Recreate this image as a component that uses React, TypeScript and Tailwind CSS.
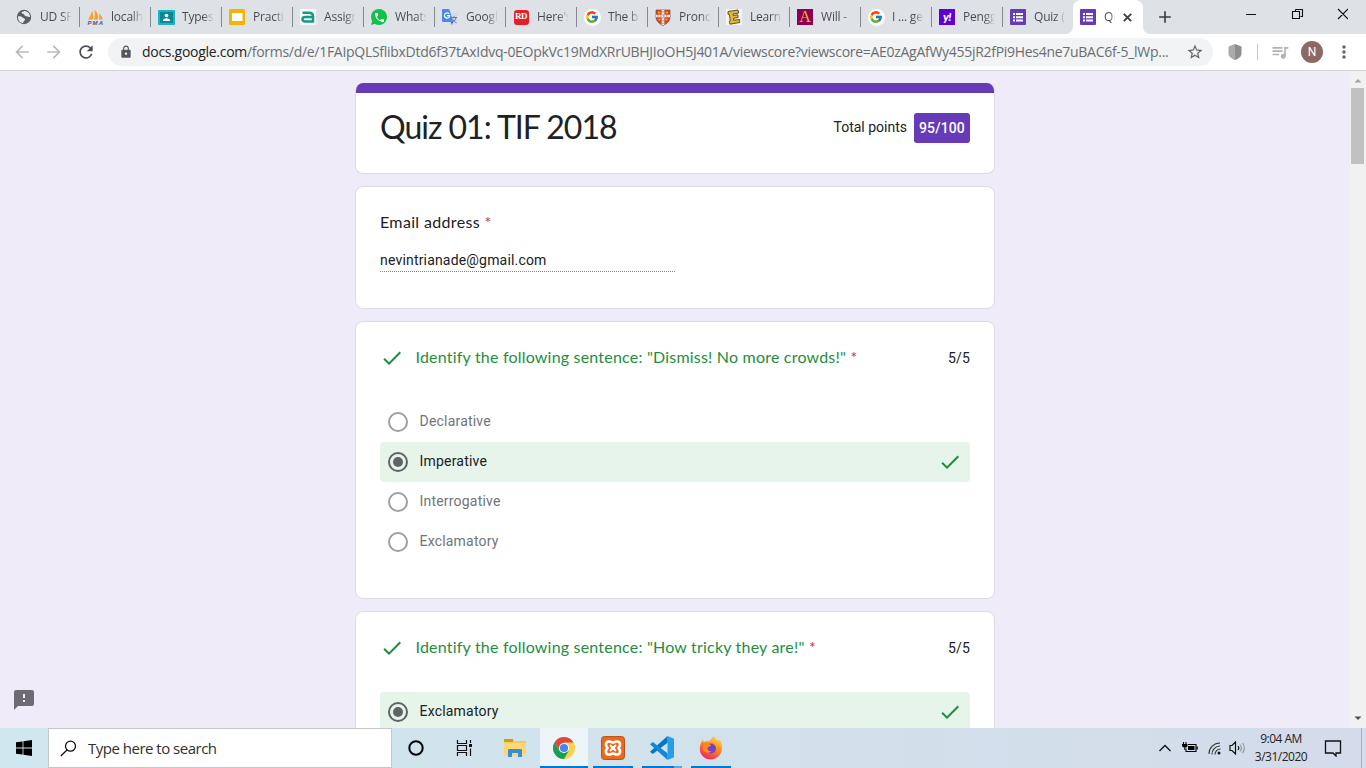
import React from "react";
import {
  MdArrowBack, MdArrowForward, MdRefresh, MdLock, MdStarBorder, MdQueueMusic,
  MdMoreVert, MdFeedback, MdAdd,
} from "react-icons/md";
import { FcGoogle } from "react-icons/fc";
import { FaWhatsapp } from "react-icons/fa";

const Globe = () => (
  <svg width="16" height="16" viewBox="0 0 16 16">
    <circle cx="8" cy="8" r="7.2" fill="#5b5f63" />
    <path d="M2 7.500c2-.5 3.500 0 4.500 1s2.500.7 2.500 2-1.500 1.500-2 3.500C3.500 13.500 1.800 11 2 7.500z" fill="#e8eaed" />
    <path d="M8.500 2c-1.500.5-3 1-2.800 2s2 .5 2.500 1.500S9 7.200 10.500 7.200s2 1.300 3.500.8C14 5 12 2.300 8.500 2z" fill="#e8eaed" />
  </svg>
);
const Pma = () => (
  <svg width="17" height="16" viewBox="0 0 17 16">
    <path d="M1 10.500C3 8 4.500 5 5 2c1.500 2.500 1.500 6 1 8.500zM7 10.500C8 7 8 4 7.500 .8c3 2.400 4 6 3.700 9.700zM12 10.500c.5-2 .3-4-.3-6 2.300 1.500 3.600 3.700 4 6z" fill="#f89c2e" />
    <text x="0.500" y="15.800" fontSize="6" fontWeight="bold" fontStyle="italic" fontFamily="Liberation Sans, sans-serif" fill="#4d5a80" textLength="15.500">PMA</text>
  </svg>
);
const Classroom = () => (
  <svg width="17" height="15" viewBox="0 0 17 15">
    <rect width="17" height="15" rx="1" fill="#19b4c5" />
    <rect x="2" y="2" width="13" height="11" fill="#0f8793" />
    <circle cx="8.500" cy="5.500" r="1.800" fill="#fff" />
    <path d="M4.800 11c0-3.700 7.400-3.700 7.400 0z" fill="#fff" />
  </svg>
);
const Slides = () => (
  <svg width="16" height="16" viewBox="0 0 16 16">
    <rect width="16" height="16" rx="1.500" fill="#f5b400" />
    <rect x="3" y="4" width="10.500" height="8" fill="#fff" />
  </svg>
);
const Assign = () => (
  <svg width="16" height="16" viewBox="0 0 16 16">
    <rect width="16" height="16" rx="1" fill="#f4f8f7" />
    <path d="M2.500 3.800h6.500c2.800 0 4 1.200 4 3.700v4.900H5.500C3.300 12.400 2.500 11.500 2.500 10.200S3.300 8.100 5.500 8.100H12" fill="none" stroke="#129c87" strokeWidth="2.500" />
  </svg>
);
const Whats = () => (
  <span className="relative flex size-4 items-center justify-center rounded-full bg-[#12c04a] text-white">
    <svg className="absolute bottom-0 left-0" width="5" height="5" viewBox="0 0 5 5"><path d="M0 5l1.500-5L5 3.500z" fill="#12c04a" /></svg>
    <svg className="relative" width="9" height="9" viewBox="3 3 18 18" fill="#fff">
      <path d="M6.600 10.800c1.400 2.800 3.800 5.100 6.600 6.600l2.200-2.200c.3-.3.700-.4 1-.2 1.100.4 2.300.6 3.600.6.600 0 1 .4 1 1V20c0 .6-.4 1-1 1C10.600 21 3 13.400 3 4c0-.6.400-1 1-1h3.500c.6 0 1 .4 1 1 0 1.200.2 2.400.6 3.600.1.300 0 .7-.2 1z" />
    </svg>
  </span>
);
const Translate = () => (
  <svg width="16" height="16" viewBox="0 0 16 16">
    <path d="M6 4h8.500c.8 0 1.200.5 1.200 1.200V15c0 .6-.4 1-1 1H9z" fill="#d3dbe8" />
    <path d="M9 8.500h6M12 7.200v1.300M14 8.700c-.8 2.500-2 4-4 5M10.500 9.800c1 2 2.300 3.200 4 4" stroke="#5f7c9d" strokeWidth="1" fill="none" />
    <path d="M1.200 0h6l4 13H1.200C.5 13 0 12.500 0 11.800V1.200C0 .5.500 0 1.200 0z" fill="#4a87ee" />
    <path d="M9 13h2.200L9.700 16z" fill="#2f62c9" />
    <path d="M7 4.800A2.600 2.600 0 1 0 7.600 6.700H5" fill="none" stroke="#fff" strokeWidth="1.200" />
  </svg>
);
const Rd = () => (
  <span className="flex h-[15px] w-[15px] items-center justify-center rounded-[3px] bg-[#e0202b] font-['Liberation_Serif',serif] text-[9px] font-bold tracking-[-0.500px] text-white">RD</span>
);
const Google = () => (
  <span className="flex size-[17px] items-center justify-center rounded-full bg-white"><FcGoogle size={14} /></span>
);
const Shield = () => (
  <svg width="16" height="17" viewBox="0 0 16 17">
    <path d="M1 1h14v7c0 4-3 6.500-7 8.500C4 14.500 1 12 1 8z" fill="#d5452b" stroke="#8a4a30" strokeWidth=".7" />
    <path d="M8 1v15M1 7h14" stroke="#f6eedc" strokeWidth="2.600" />
    <path d="M8 2v13M2 7h12" stroke="#b9502e" strokeWidth=".8" strokeDasharray="1.500 1.500" />
    <path d="M3 3.500h2.500M10.500 3.500H13M3.500 10.500h2M10.500 10.500h2" stroke="#f0b43c" strokeWidth="1.600" />
  </svg>
);
const LearnE = () => (
  <svg width="16" height="16" viewBox="0 0 16 16">
    <rect width="16" height="16" fill="#f6f4ee" />
    <path d="M2 2.500l10-1.500.7 3-5.700 1 .3 1.500 4.500-.7.300 2.700-4.600.8.300 2 5.700-.8.300 3-9.800 1.700-.7-3 1-.5L3.400 5.500 2 5.300z" fill="#e8b62b" stroke="#4b4330" strokeWidth=".9" />
  </svg>
);
const LetterA = () => (
  <span className="flex size-4 items-center justify-center bg-[#8c0051] font-['Liberation_Serif',serif] text-[16px] leading-4 text-[#f5b320]">A</span>
);
const Yahoo = () => (
  <span className="flex size-4 items-center justify-center bg-[#5f01d1] font-['Lato',sans-serif] text-[12px] leading-none font-black tracking-[-0.500px] text-white italic">y!</span>
);
const Forms = () => (
  <svg width="16" height="16" viewBox="0 0 16 16">
    <rect width="16" height="16" rx="1" fill="#673ab7" />
    <path d="M3 4h2v2H3zM6 4h7v2H6zM3 7.200h2v2H3zM6 7.200h7v2H6zM3 10.400h2v2H3zM6 10.400h7v2H6z" fill="#fff" />
  </svg>
);

const tabs: [string, () => React.JSX.Element][] = [
  ["UD SF", Globe], ["localh", Pma], ["Types", Classroom], ["Practi", Slides], ["Assigr", Assign],
  ["Whats", Whats], ["Googl", Translate], ["Here's", Rd], ["The b", Google], ["Prono", Shield],
  ["Learn", LearnE], ["Will -", LetterA], ["I ... ge", Google], ["Pengg", Yahoo], ["Quiz (", Forms],
];

function TabStrip() {
  return (
    <div className="flex h-[34px] shrink-0 bg-[#dee1e6] pl-2">
      {tabs.map(([label, Icon], i) => (
        <div key={i} className="flex w-[71px] shrink-0 items-center pl-[7px]">
          <span className="flex w-[18px] shrink-0 justify-center"><Icon /></span>
          <span className="ml-[7px] w-[32px] overflow-hidden bg-linear-to-r from-[#45494d] from-65% to-[#dee1e6] bg-clip-text text-[12px] tracking-[-0.200px] whitespace-nowrap text-transparent">{label}</span>
          {i < 14 && <span className="-mr-px ml-auto h-5 w-px bg-[#85888c]" />}
        </div>
      ))}
      <div className="relative flex w-[70px] shrink-0 items-center rounded-t-lg bg-white pl-[7px]">
        <svg className="absolute bottom-0 -left-2" width="8" height="8"><path d="M8 0v8H0c5 0 8-3 8-8z" fill="#fff" /></svg>
        <svg className="absolute -right-2 bottom-0" width="8" height="8"><path d="M0 0v8h8C3 8 0 5 0 0z" fill="#fff" /></svg>
        <Forms />
        <span className="ml-2 w-[11px] overflow-hidden bg-linear-to-r from-[#45494d] from-60% to-white bg-clip-text text-[12px] whitespace-nowrap text-transparent">Qu</span>
        <svg className="ml-2" width="9" height="9" viewBox="0 0 9 9"><path d="M.8.800l7.400 7.400M8.200.8L.8 8.200" stroke="#3c4043" strokeWidth="1.900" /></svg>
      </div>
      <MdAdd size={20} className="mt-[7px] ml-[12px] text-[#3c4043]" />
      <div className="ml-auto flex pt-2 pr-[18px]">
        <svg width="102" height="14" viewBox="0 0 102 14" fill="none" stroke="#111" strokeWidth="1.100">
          <path d="M0 6.500h10M49.500 1.500h7v7h-2M46.500 3.500h7v7h-7zM49.500 3v-1.500M92 1l10 10M102 1L92 11" />
        </svg>
      </div>
    </div>
  );
}

function Toolbar() {
  return (
    <div className="flex h-[37px] shrink-0 items-center border-b border-[#d5d6da] bg-white pl-3 text-[#5f6368]">
      <MdArrowBack size={20} className="text-[#b9bbbe]" />
      <MdArrowForward size={20} className="ml-3 text-[#b9bbbe]" />
      <MdRefresh size={20} className="ml-3 text-[#4b4f53]" />
      <div className="ml-3 flex h-7 w-[1105px] items-center rounded-full bg-[#f1f3f4] pl-[11px]">
        <MdLock size={14} className="text-[#54585c]" />
        <span className="mb-px ml-[9px] w-[1040px] text-[14px] tracking-[-0.288px] whitespace-nowrap text-[#6a6e73]">
          <span className="text-[#202124]">docs.google.com</span>/forms/d/e/1FAIpQLSflibxDtd6f37tAxIdvq-0EOpkVc19MdXRrUBHJIoOH5J401A/viewscore?viewscore=AE0zAgAfWy455jR2fPi9Hes4ne7uBAC6f-5_lWp...
        </span>
        <MdStarBorder size={18} className="ml-[4px] shrink-0" />
      </div>
      <svg className="ml-[15px]" width="14" height="16" viewBox="0 0 14 16">
        <path d="M7 0l6.500 2.500v7C13.500 12.500 11 14.500 7 16z" fill="#8e8e8e" />
        <path d="M7 0L.5 2.500v7C.5 12.500 3 14.500 7 16z" fill="#aaa" />
      </svg>
      <span className="ml-[15px] h-4 w-px bg-[#c4c6c9]" />
      <MdQueueMusic size={20} className="ml-[12px] text-[#b0b2b5]" />
      <span className="ml-[11px] flex size-[22px] items-center justify-center rounded-full bg-[#8d6a61] font-['Roboto',sans-serif] text-[12px] text-white">N</span>
      <MdMoreVert size={20} className="ml-[11px]" />
    </div>
  );
}

const Check = () => (
  <svg width="24" height="24" viewBox="0 0 24 24" fill="#1e8e3e" className="shrink-0">
    <path d="M9 16.170L4.830 12l-1.420 1.410L9 19 21 7l-1.410-1.410z" />
  </svg>
);

function Option({ label, selected = false }: { label: string; selected?: boolean }) {
  return (
    <div className={selected ? "flex h-10 items-center rounded bg-[#e6f4ea] px-2 text-[#202124]" : "flex h-10 items-center px-2 text-[#70757a]"}>
      <span className={selected ? "flex size-5 items-center justify-center rounded-full border-2 border-[#5f6368]" : "size-5 rounded-full border-2 border-[#9aa0a6]"}>
        {selected && <span className="size-[10px] rounded-full bg-[#5f6368]" />}
      </span>
      <span className="mb-[2px] ml-[11.500px] flex-1 text-[14px] leading-5 tracking-[0.200px]">{label}</span>
      {selected && <Check />}
    </div>
  );
}

function Question({ title, children }: { title: string; children: React.ReactNode }) {
  return (
    <section className="mt-3 shrink-0 rounded-lg border border-[#dadce0] bg-white px-6 pt-6 pb-9">
      <div className="flex h-6 items-center">
        <Check />
        <h2 className="mb-[3px] ml-[11.500px] flex-1 font-['Lato',sans-serif] text-[16px] leading-6 tracking-[0.200px] text-[#1e8e3e]">
          {title} <span className="text-[#d93025]">*</span>
        </h2>
        <span className="text-[14px] tracking-[0.200px] text-[#202124]">5/5</span>
      </div>
      <div className="mt-8">{children}</div>
    </section>
  );
}

function Slot({ children, active = false, open = false }: { children: React.ReactNode; active?: boolean; open?: boolean }) {
  return (
    <div className={active ? "relative mr-px flex h-10 w-12 items-center justify-center bg-[#edf5f9]" : "relative mr-px flex h-10 w-12 items-center justify-center"}>
      {children}
      {active && <span className="absolute inset-x-0 bottom-0 h-[2px] bg-[#0078d7]" />}
      {open && <span className="absolute inset-x-1 bottom-0 h-[2px] bg-[#0078d7]" />}
    </div>
  );
}

function Taskbar() {
  return (
    <div className="flex h-10 shrink-0 items-center bg-linear-to-r from-[#cfe7ef] via-[#d1e3ec] via-40% to-[#d4dbea] text-black">
      <div className="flex w-12 justify-center">
        <svg width="16" height="16" viewBox="0 0 16 16"><path d="M0 2.300L6.600 1.400V7.600H0zM7.400 1.300L16 0V7.600H7.400zM0 8.400H6.600V14.600L0 13.700zM7.400 8.400H16V16L7.400 14.700z" /></svg>
      </div>
      <div className="flex h-10 w-[344px] items-center border border-[#c2c7ca] bg-white pl-[11px]">
        <svg width="17" height="17" viewBox="0 0 17 17" fill="none" stroke="#111" strokeWidth="1.300"><circle cx="10.500" cy="6.200" r="5" /><path d="M7 10L.8 16" /></svg>
        <span className="ml-[11px] text-[15px] tracking-[-0.500px] text-[#303030]">Type here to search</span>
      </div>
      <div className="flex w-12 justify-center">
        <svg width="16" height="16" viewBox="0 0 16 16"><circle cx="8" cy="8" r="6.700" fill="none" stroke="#000" strokeWidth="2" /></svg>
      </div>
      <div className="mr-[3px] flex w-12 justify-center">
        <svg width="17" height="16" viewBox="0 0 17 16" fill="none" stroke="#111" strokeWidth="1.200">
          <path d="M1.500 0v3.500h9V0M1.500 16v-3.500h9V16M1.500 5.500h9v5h-9zM14.500 0v3M14.500 8.500V16" /><path d="M13 4h3v3h-3z" fill="#111" stroke="none" />
        </svg>
      </div>
      <Slot>
        <svg width="22" height="18" viewBox="0 0 22 18">
          <path d="M0 0h9l1.500 2H22v15H0z" fill="#f6cb5c" /><path d="M0 0h9v3H0z" fill="#d79a13" /><path d="M0 4h22v13H0z" fill="#fbd875" />
          <path d="M4 18v-6.500c0-1 .5-1.500 1.500-1.500h11c1 0 1.500.5 1.500 1.500V18h-4v-4H8v4z" fill="#3a8ed0" />
        </svg>
      </Slot>
      <Slot active>
        <svg width="22" height="22" viewBox="0 0 22 22">
          <circle cx="11" cy="11" r="11" fill="#fdd04b" />
          <path d="M1.470 5.500A11 11 0 0 1 20.530 5.500H11L6.200 13.800z" fill="#db4a3c" />
          <path d="M1.470 5.500A11 11 0 0 0 11 22L15.800 13.700 11 11 6.200 13.800z" fill="#189e5b" />
          <circle cx="11" cy="11" r="5.100" fill="#fff" /><circle cx="11" cy="11" r="4.100" fill="#4684ee" />
        </svg>
      </Slot>
      <Slot open>
        <svg width="24" height="24" viewBox="0 0 24 24">
          <rect x=".5" y=".5" width="23" height="23" rx="3" fill="#ea6a1c" stroke="#b95318" />
          <path d="M8 5.500C4.500 5.500 4 9.500 6.500 12 4 14.500 4.500 18.500 8 18.500c2 0 2.500-1 4-1s2 1 4 1c3.500 0 4-4 1.500-6.500 2.500-2.500 2-6.500-1.500-6.500-2 0-2.500 1-4 1s-2-1-4-1z" fill="#ea6a1c" stroke="#fff" strokeWidth="2.600" strokeLinejoin="round" />
          <path d="M9.700 9.700l4.600 4.600M14.300 9.700l-4.600 4.600" stroke="#fff" strokeWidth="2.200" strokeLinecap="round" />
        </svg>
      </Slot>
      <div className="relative mr-px flex h-10 w-12 items-center justify-center">
        <svg width="24" height="24" viewBox="0 0 24 24">
          <path d="M17.500 0L24 2.800v18.400L17.500 24z" fill="#249fe8" />
          <path d="M17.500 0v6.700L2.800 18 0 15.700z" fill="#0277c4" /><path d="M17.500 24v-6.700L2.800 6 0 8.300z" fill="#1188d6" />
        </svg>
        <span className="absolute bottom-0 left-1 h-[2px] w-8 bg-[#0078d7]" />
        <span className="absolute bottom-0 left-9 h-[2px] w-2 bg-[#5fa5df]" />
      </div>
      <Slot open>
        <svg width="24" height="24" viewBox="0 0 24 24">
          <defs><linearGradient id="ff" x1=".8" y1="0" x2=".3" y2="1"><stop offset="0" stopColor="#ffdf3d" /><stop offset=".45" stopColor="#ff8a1f" /><stop offset="1" stopColor="#f0245e" /></linearGradient></defs>
          <path d="M14.500 0c1 2 3.500 3 4.500 5l1.500-1.200C22.500 6.500 23.500 9.500 23 13c-.7 6-5.500 10.500-11.500 10.500S.5 18.500.8 12.500C.9 9 2 6.500 4 4l.8 2.500C6.500 5 8 5 9.500 5.500 11.500 4.500 12.500 2.500 14.500 0z" fill="url(#ff)" />
          <circle cx="12" cy="12.500" r="5" fill="#7b40c8" /><path d="M4.500 9c3-2.500 6-1.500 7.500.5-1 1.500-3.500 1-3.500 3s2 3 4 2.500c-2 3-8 2-8.700-2z" fill="#ff8a24" />
        </svg>
      </Slot>
      <div className="ml-auto flex items-center">
        <svg width="12" height="8" viewBox="0 0 12 8" fill="none" stroke="#111" strokeWidth="1.300"><path d="M.5 7L6 1.500 11.500 7" /></svg>
        <svg className="ml-[10px]" width="17" height="12" viewBox="0 0 17 12">
          <path d="M7 2.500h8v7H5V6.500M2.500 0v2M5 0v2" fill="none" stroke="#000" strokeWidth="1.100" />
          <path d="M1 2h5.500v1.500C6.500 5 5.300 5.500 4.300 5.600V8h-1V5.600C2 5.400 1 4.700 1 3.500zM7 4h6.500v4H7zM15.500 4.500h1.300v3h-1.300z" />
        </svg>
        <svg className="ml-[10px]" width="14" height="13" viewBox="0 0 14 13" fill="none" stroke="#333" strokeWidth="1.100">
          <path d="M1 12A11 11 0 0 1 12 1M4 12.500A8 8 0 0 1 12 4M7 12.500A5.500 5.500 0 0 1 12.500 7" /><circle cx="11" cy="11" r="1.500" fill="#111" stroke="none" />
        </svg>
        <svg className="ml-[7px]" width="17" height="14" viewBox="0 0 17 14" fill="none" stroke="#111" strokeWidth="1.200">
          <path d="M1 4.500h2L6.500 1v12L3 9.500H1zM9 5c.8 1 .8 3 0 4" /><path d="M11 3.500c1.600 2 1.600 5 0 7M13.500 2c2.200 3 2.200 7 0 10" stroke="#9299a5" />
        </svg>
        <div className="ml-[7px] w-[56px] text-center text-[12px] leading-[18px] tracking-[-0.500px] whitespace-nowrap text-[#222]">
          <div>9:04 AM</div><div>3/31/2020</div>
        </div>
        <svg className="ml-[15px]" width="18" height="17" viewBox="0 0 18 17" fill="none" stroke="#111" strokeWidth="1.300"><path d="M1.500 1h15v12h-4.500v3l-3-3H1.500z" /></svg>
        <span className="mr-1 ml-[19px] h-10 w-px bg-[#aab2c0]" />
      </div>
    </div>
  );
}

export default function App() {
  return (
    <div className="flex h-[768px] w-[1366px] flex-col overflow-hidden font-['Open_Sans','Noto_Sans',sans-serif]">
      <TabStrip />
      <Toolbar />
      <div className="flex h-[657px] shrink-0">
        <main className="relative flex h-full flex-1 flex-col items-center overflow-hidden bg-[#f0ebf8] font-['Roboto',sans-serif]">
          <div className="flex h-full w-[640px] flex-col pt-3">
            <header className="h-[91px] shrink-0 overflow-hidden rounded-lg border border-t-0 border-[#dadce0] bg-white">
              <div className="-mx-px h-[10px] bg-[#673ab7]" />
              <div className="flex items-start px-6">
                <h1 className="mt-[14px] flex-1 font-['Lato',sans-serif] text-[32px] leading-10 tracking-[-1px] text-[#202124]">Quiz 01: TIF 2018</h1>
                <span className="mt-[24px] text-[14px] leading-5 text-[#202124]">Total points</span>
                <span className="mt-5 ml-[7px] flex h-[30px] w-14 items-center justify-center rounded-[3px] bg-[#673ab7] text-[14px] font-medium tracking-[0.100px] text-white">95/100</span>
              </div>
            </header>
            <section className="mt-3 h-[123px] shrink-0 rounded-lg border border-[#dadce0] bg-white px-6 pt-[23px]">
              <h2 className="font-['Lato',sans-serif] text-[16px] leading-6 tracking-[0.350px] text-[#202124]">Email address <span className="text-[#d93025]">*</span></h2>
              <div className="mt-[15px] h-[23px] w-[295px] border-b border-dotted border-[#80868b] pt-px text-[14px] leading-5 tracking-[0.180px] text-[#202124]">nevintrianade@gmail.com</div>
            </section>
            <Question title={'Identify the following sentence: "Dismiss! No more crowds!"'}>
              <Option label="Declarative" />
              <Option label="Imperative" selected />
              <Option label="Interrogative" />
              <Option label="Exclamatory" />
            </Question>
            <Question title={'Identify the following sentence: "How tricky they are!"'}>
              <Option label="Exclamatory" selected />
              <Option label="Declarative" />
            </Question>
          </div>
          <MdFeedback size={24} className="absolute bottom-[16px] left-3 text-[#6f6b73]" />
        </main>
        <div className="flex w-4 flex-col items-center justify-between bg-[#f1f1f1] py-[7px]">
          <div>
            <svg width="14" height="5" viewBox="0 0 14 5"><path d="M3.500 4.500L7 1l3.500 3.500z" fill="#a3a3a3" /></svg>
            <div className="mt-[5px] h-[76px] w-[13px] bg-[#c1c1c1]" />
          </div>
          <svg width="14" height="5" viewBox="0 0 14 5"><path d="M3.500 .5L7 4 10.500.5z" fill="#505050" /></svg>
        </div>
      </div>
      <Taskbar />
    </div>
  );
}
